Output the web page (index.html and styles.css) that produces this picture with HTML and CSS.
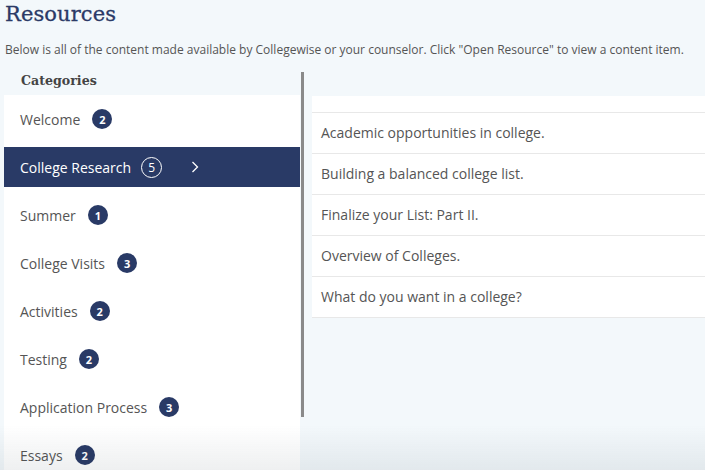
FILE: index.html
```html
<!DOCTYPE html>
<html>
<head>
<meta charset="utf-8">
<link rel="stylesheet" href="styles.css">
</head>
<body>
<header class="page-head">
  <h1 class="title">Resources</h1>
  <p class="intro">Below is all of the content made available by Collegewise or your counselor. Click "Open Resource" to view a content item.</p>
</header>
<main class="layout">
  <section class="sidebar">
    <div class="side-scroll">
      <h2 class="cat-title">Categories</h2>
      <ul class="cat-list">
        <li class="cat"><span class="cat-name">Welcome</span><span class="badge">2</span></li>
        <li class="cat active"><span class="cat-name">College Research</span><span class="badge">5</span>
          <svg class="chev" width="8" height="12" viewBox="0 0 8 12"><polyline points="1.5,1 6.5,6 1.5,11" fill="none" stroke="#fff" stroke-width="1.3"/></svg>
        </li>
        <li class="cat"><span class="cat-name">Summer</span><span class="badge">1</span></li>
        <li class="cat"><span class="cat-name">College Visits</span><span class="badge">3</span></li>
        <li class="cat"><span class="cat-name">Activities</span><span class="badge">2</span></li>
        <li class="cat"><span class="cat-name">Testing</span><span class="badge">2</span></li>
        <li class="cat"><span class="cat-name">Application Process</span><span class="badge">3</span></li>
        <li class="cat"><span class="cat-name">Essays</span><span class="badge">2</span></li>
      </ul>
    </div>
    <div class="scroll-thumb"></div>
  </section>
  <section class="content">
    <ul class="res-list">
      <li class="res res-head"></li>
      <li class="res">Academic opportunities in college.</li>
      <li class="res">Building a balanced college list.</li>
      <li class="res">Finalize your List: Part II.</li>
      <li class="res">Overview of Colleges.</li>
      <li class="res">What do you want in a college?</li>
    </ul>
  </section>
</main>
<div class="fade"></div>
</body>
</html>
```

FILE: styles.css
```css
html, body {
  margin: 0;
  padding: 0;
  height: 100%;
  overflow: hidden;
}
body {
  background: #f3f8fb;
  font-family: "Open Sans", "Liberation Sans", sans-serif;
  color: #555;
}
.page-head {
  padding: 0 0 0 5px;
}
.title {
  margin: 0;
  padding-top: 2px;
  font-family: "DejaVu Serif", "Liberation Serif", serif;
  font-weight: normal;
  font-size: 21px;
  line-height: 24px;
  color: #2b3a67;
  letter-spacing: 0.1px;
  -webkit-text-stroke: 0.3px #2b3a67;
}
.intro {
  margin: 16px 0 0 0;
  font-size: 12px;
  line-height: 16px;
  color: #555;
}
.layout {
  display: flex;
  align-items: flex-start;
  margin-top: 14px;
  height: 398px;
  overflow: hidden;
}
.sidebar {
  display: flex;
  align-items: flex-start;
}
.side-scroll {
  width: 296px;
  margin-left: 4px;
}
.cat-title {
  margin: 0;
  padding-left: 17px;
  height: 23px;
  font-family: "DejaVu Serif", "Liberation Serif", serif;
  font-weight: bold;
  font-size: 12.6px;
  line-height: 18px;
  color: #444;
}
.cat-list {
  list-style: none;
  margin: 0;
  padding: 0 0 20px 0;
  background: #fff;
}
.cat {
  display: flex;
  align-items: center;
  height: 40px;
  margin: 0;
  padding: 4px 0 4px 16px;
  font-size: 14px;
  color: #555;
}
.cat.active {
  background: #293a66;
  color: #fff;
  height: 40px;
  padding: 0 0 0 16px;
  margin: 4px 0;
}
.badge {
  display: inline-flex;
  align-items: center;
  justify-content: center;
  width: 20px;
  height: 20px;
  margin-left: 12px;
  border-radius: 50%;
  background: #293a66;
  color: #fff;
  font-size: 11px;
  font-weight: bold;
}
.active .badge {
  background: transparent;
  border: 1px solid #fff;
  width: 19px;
  height: 19px;
  font-weight: normal;
  font-size: 12px;
  margin-left: 10px;
}
.chev {
  margin-left: 29px;
}
.scroll-thumb {
  width: 3px;
  height: 345px;
  margin-left: 1px;
  background: #8a8a8a;
}
.content {
  flex: 1;
  margin-left: 8px;
  padding-top: 24px;
}
.res-list {
  list-style: none;
  margin: 0;
  padding: 0;
  background: #fff;
}
.res {
  height: 40px;
  line-height: 40px;
  padding-left: 9px;
  border-bottom: 1px solid #e8e8e8;
  font-size: 14px;
  color: #555;
}
.res-head {
  height: 16px;
}
.fade {
  position: fixed;
  left: 0;
  right: 0;
  bottom: 0;
  height: 45px;
  background: linear-gradient(to bottom, rgba(0,0,0,0), rgba(40,60,70,0.08));
  pointer-events: none;
}
```
